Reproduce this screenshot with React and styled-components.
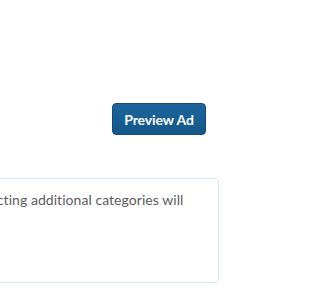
import React from 'react';
import styled, { createGlobalStyle } from 'styled-components';

const GlobalStyle = createGlobalStyle`
	html, body {
		margin:0;
		padding:0;
		background:#fff;
		overflow:hidden;
	}
	body {
		font-family:Lato, "Open Sans", sans-serif;
	}
`;

const Page = styled.div`
	width:264px;
	margin-left:-45px;
	padding-top:103px;
	height:288px;
	box-sizing:border-box;
`;

const Actions = styled.div`
	display:flex;
	justify-content:flex-end;
	padding-right:13px;
`;

const PreviewButton = styled.button`
	width:94px;
	height:32px;
	padding:0;
	border:1px solid #104d7c;
	border-radius:4px;
	background:linear-gradient(#1d659d, #145789);
	color:#fff;
	font-family:Lato, sans-serif;
	font-weight:700;
	font-size:14px;
	letter-spacing:-0.1px;
	cursor:pointer;
`;

const Notice = styled.div`
	margin-top:43px;
	height:105px;
	box-sizing:border-box;
	padding:11px 15px;
	border:1px solid #d2eaee;
	border-radius:4px;
	color:#5c5c5c;
	font-size:14px;
	line-height:20px;
	letter-spacing:0.05px;
	overflow:hidden;
`;

export default function App() {
	return (
		<>
			<GlobalStyle />
			<Page>
				<Actions>
					<PreviewButton type="button">Preview Ad</PreviewButton>
				</Actions>
				<Notice>Selecting additional categories will</Notice>
			</Page>
		</>
	);
}
